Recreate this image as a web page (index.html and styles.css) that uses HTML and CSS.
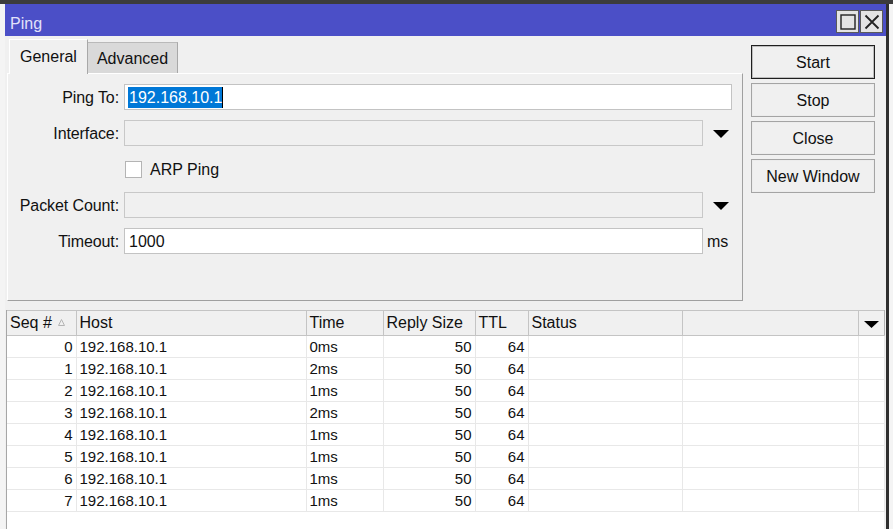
FILE: index.html
```html
<!DOCTYPE html>
<html>
<head>
<meta charset="utf-8">
<title>Ping</title>
<link rel="stylesheet" href="styles.css">
</head>
<body>
<div class="topstrip"></div>
<div class="window">
  <div class="titlebar">
    <span class="title">Ping</span>
    <div class="winbtns">
      <span class="wbtn"><svg width="16" height="16" viewBox="0 0 16 16"><rect x="1" y="1" width="14" height="14" fill="none" stroke="#222" stroke-width="1.4"/></svg></span>
      <span class="wbtn"><svg width="16" height="16" viewBox="0 0 16 16"><path d="M1.5 1.5 L14.5 14.5 M14.5 1.5 L1.5 14.5" stroke="#222" stroke-width="1.8" fill="none"/></svg></span>
    </div>
  </div>
  <div class="top">
    <div class="left">
      <div class="tabs">
        <div class="tab active">General</div>
        <div class="tab">Advanced</div>
      </div>
      <div class="panel">
        <div class="label">Ping To:</div>
        <div class="input white wide"><span class="sel">192.168.10.1</span></div>

        <div class="label">Interface:</div>
        <div class="input gray"></div>
        <div class="dd"><svg width="16" height="8" viewBox="0 0 16 8"><polygon points="0,0 16,0 8,8" fill="#000"/></svg></div>

        <div class="label"></div>
        <div class="check wide"><span class="box"></span><span>ARP Ping</span></div>

        <div class="label">Packet Count:</div>
        <div class="input gray"></div>
        <div class="dd"><svg width="16" height="8" viewBox="0 0 16 8"><polygon points="0,0 16,0 8,8" fill="#000"/></svg></div>

        <div class="label">Timeout:</div>
        <div class="input white"><span class="val">1000</span></div>
        <div class="unit">ms</div>
      </div>
    </div>
    <div class="buttons">
      <div class="btn default">Start</div>
      <div class="btn">Stop</div>
      <div class="btn">Close</div>
      <div class="btn">New Window</div>
    </div>
  </div>
  <div class="tablewrap">
    <table class="grid">
      <colgroup>
        <col class="c1"><col class="c2"><col class="c3"><col class="c4"><col class="c5"><col class="c6"><col class="c7"><col class="c8">
      </colgroup>
      <thead>
        <tr>
          <th>Seq # <svg class="sort" width="7" height="7" viewBox="0 0 7 7"><polygon points="3.5,0.5 6.5,6.5 0.5,6.5" fill="none" stroke="#b4b4b4" stroke-width="1"/></svg></th>
          <th>Host</th>
          <th>Time</th>
          <th>Reply Size</th>
          <th>TTL</th>
          <th>Status</th>
          <th></th>
          <th class="menu"><svg width="15" height="7" viewBox="0 0 15 7"><polygon points="0,0 15,0 7.5,7" fill="#000"/></svg></th>
        </tr>
      </thead>
      <tbody>
        <tr><td class="r">0</td><td>192.168.10.1</td><td>0ms</td><td class="r">50</td><td class="r">64</td><td></td><td></td><td></td></tr>
        <tr><td class="r">1</td><td>192.168.10.1</td><td>2ms</td><td class="r">50</td><td class="r">64</td><td></td><td></td><td></td></tr>
        <tr><td class="r">2</td><td>192.168.10.1</td><td>1ms</td><td class="r">50</td><td class="r">64</td><td></td><td></td><td></td></tr>
        <tr><td class="r">3</td><td>192.168.10.1</td><td>2ms</td><td class="r">50</td><td class="r">64</td><td></td><td></td><td></td></tr>
        <tr><td class="r">4</td><td>192.168.10.1</td><td>1ms</td><td class="r">50</td><td class="r">64</td><td></td><td></td><td></td></tr>
        <tr><td class="r">5</td><td>192.168.10.1</td><td>1ms</td><td class="r">50</td><td class="r">64</td><td></td><td></td><td></td></tr>
        <tr><td class="r">6</td><td>192.168.10.1</td><td>1ms</td><td class="r">50</td><td class="r">64</td><td></td><td></td><td></td></tr>
        <tr><td class="r">7</td><td>192.168.10.1</td><td>1ms</td><td class="r">50</td><td class="r">64</td><td></td><td></td><td></td></tr>
      </tbody>
    </table>
  </div>
</div>
</body>
</html>
```

FILE: styles.css
```css
* { box-sizing: border-box; }
html, body {
  margin: 0;
  padding: 0;
  height: 529px;
  overflow: hidden;
  background: #f4f4f4;
  font-family: "Liberation Sans", Arial, sans-serif;
  font-size: 16px;
  color: #111;
}
.topstrip {
  height: 4px;
  background: #3c3c3c;
}
.window {
  margin-left: 5px;
  width: 884px;
  height: 525px;
  border-right: 3px solid #2f2f2f;
  background: #f0f0f0;
  display: flex;
  flex-direction: column;
}
.titlebar {
  height: 32px;
  background: #4b4fc7;
  display: flex;
  justify-content: space-between;
  align-items: flex-start;
  padding: 6px 3px 0 5px;
}
.title {
  color: #e2e2fa;
  line-height: 22px;
  padding-top: 3px;
}
.winbtns {
  display: flex;
  gap: 1px;
}
.wbtn {
  width: 23px;
  height: 23px;
  background: #e4e4e4;
  border: 1px solid #5a5a5a;
  display: flex;
  align-items: center;
  justify-content: center;
}
.top {
  display: flex;
  height: 265px;
}
.left {
  margin-left: 2px;
  width: 736px;
  display: flex;
  flex-direction: column;
}
.tabs {
  display: flex;
  align-items: flex-end;
  height: 37px;
  margin-left: 2px;
  position: relative;
  z-index: 1;
}
.tab {
  height: 31px;
  line-height: 32px;
  padding: 0 9px;
  background: #d9d9d9;
  border-top: 1px solid #b9b9b9;
  border-right: 1px solid #a8a8a8;
}
.tab.active {
  height: 35px;
  line-height: 34px;
  padding: 0 10px;
  background: #f0f0f0;
  border-top: 1px solid #ffffff;
  border-left: 1px solid #ffffff;
  border-right: 1px solid #a8a8a8;
  margin-bottom: -1px;
}
.panel {
  height: 228px;
  border-top: 1px solid #ffffff;
  border-left: 1px solid #ffffff;
  border-right: 1px solid #a0a0a0;
  border-bottom: 1px solid #a0a0a0;
  display: grid;
  grid-template-columns: 116px 579px 29px;
  grid-auto-rows: 26px;
  row-gap: 10px;
  align-content: start;
  padding-top: 10px;
}
.label {
  text-align: right;
  padding-right: 5px;
  line-height: 27px;
  white-space: nowrap;
  letter-spacing: -0.1px;
}
.input {
  border: 1px solid #c3c3c3;
  height: 26px;
  display: flex;
  align-items: center;
  padding-left: 3px;
  padding-top: 1px;
}
.input.white { background: #ffffff; }
.input.gray { background: #f0f0f0; border-color: #c8c8c8; }
.wide { grid-column: 2 / 4; }
.sel {
  background: #0078d7;
  color: #ffffff;
  line-height: 21px;
  padding: 0 0 0 1px;
  border-right: 1px solid #000;
}
.val { padding-left: 1px; }
.dd {
  display: flex;
  align-items: center;
  justify-content: flex-end;
  padding-right: 3px;
  padding-top: 1px;
}
.unit {
  line-height: 27px;
  padding-left: 4px;
}
.check {
  display: flex;
  align-items: center;
  gap: 8px;
  padding-left: 1px;
  padding-top: 1px;
}
.box {
  width: 17px;
  height: 17px;
  background: #fff;
  border: 1px solid #b4b4b4;
}
.buttons {
  margin-left: 8px;
  width: 124px;
  padding-top: 9px;
  display: flex;
  flex-direction: column;
  gap: 4px;
}
.btn {
  height: 34px;
  line-height: 34px;
  text-align: center;
  border: 1px solid #a4a4a4;
  box-shadow: inset 0 0 0 1px #ececec;
  background: #f0f0f0;
}
.btn.default {
  border: 1px solid #1f1f1f;
  box-shadow: inset 0 0 0 1px #bdbdbd;
}
.tablewrap {
  margin-top: 9px;
  margin-left: 1px;
  width: 878px;
  flex: 1;
  background: #ffffff;
  border-left: 1px solid #a6a6a6;
}
.grid {
  border-collapse: collapse;
  table-layout: fixed;
  width: 877px;
}
.c1 { width: 69px; }
.c2 { width: 230px; }
.c3 { width: 77px; }
.c4 { width: 92px; }
.c5 { width: 53px; }
.c6 { width: 154px; }
.c7 { width: 176px; }
.c8 { width: 26px; }
.grid th {
  height: 25px;
  padding: 0 3px;
  background: #f0f0f0;
  border-top: 1px solid #c4c4c4;
  border-bottom: 1px solid #c4c4c4;
  border-right: 1px solid #c4c4c4;
  font-weight: normal;
  text-align: left;
  white-space: nowrap;
  overflow: hidden;
  line-height: 24px;
}
.grid th.menu {
  text-align: center;
  padding: 0;
  border-right: 1px solid #b0b0b0;
}
.sort { margin-left: 2px; vertical-align: 2px; }
.grid td {
  height: 22px;
  font-size: 15px;
  line-height: 20px;
  border-bottom: 1px solid #e8e8e8;
  border-right: 1px solid #e8e8e8;
  padding: 0 3px;
  white-space: nowrap;
  overflow: hidden;
}
.grid td.r { text-align: right; }
```
